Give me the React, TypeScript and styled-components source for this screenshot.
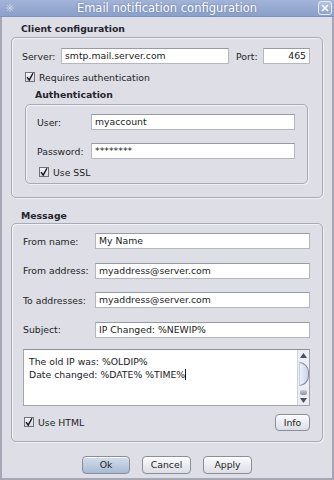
import React from "react";
import styled, { createGlobalStyle } from "styled-components";

const Global = createGlobalStyle`
  html, body { margin: 0; padding: 0; background: #dddee6; }
  body { font-family: "DejaVu Sans", "Liberation Sans", sans-serif; font-size: 9.3px; color: #1e1e22; }
  * { box-sizing: border-box; }
`;

const Window = styled.div`
  width: 334px;
  height: 480px;
  display: flex;
  flex-direction: column;
  background: #dddee6;
  border-left: 2px solid #a5a8b4;
  border-right: 2px solid #a5a8b4;
  border-bottom: 2px solid #a5a8b4;
`;

const TitleBar = styled.div`
  height: 17px;
  margin: 0 -2px;
  display: flex;
  align-items: center;
  padding: 0 2px 0 4px;
  background: linear-gradient(#a2b4d8, #8aa0ca);
  border-bottom: 1px solid #7d92bb;
`;

const TitleIcon = styled.div`
  width: 12px;
  height: 12px;
  opacity: 0.45;
  display: flex;
  align-items: center;
  justify-content: center;
`;

const TitleText = styled.div`
  flex: 1;
  text-align: center;
  color: #ffffff;
  font-size: 11.5px;
  line-height: 17px;
  text-shadow: 0 0 2px #5b6f98;
`;

const CloseBtn = styled.div`
  width: 14px;
  height: 14px;
  border: 1px solid #e6ecf7;
  border-radius: 3px;
  background: linear-gradient(#b3c3e2, #8ea4cd);
  display: flex;
  align-items: center;
  justify-content: center;
`;

const Content = styled.div`
  flex: 1;
  display: flex;
  flex-direction: column;
  padding: 0 9px;
`;

const GroupTitle = styled.div<{ $top: number; $weight?: string; $indent?: number }>`
  margin-top: ${(p) => p.$top}px;
  margin-bottom: ${(p) => (p.$top < 8 ? 1 : 0)}px;
  padding-left: ${(p) => p.$indent ?? 10}px;
  height: 14px;
  line-height: 14px;
  font-weight: ${(p) => p.$weight ?? "bold"};
  color: #26262c;
`;

const Group = styled.div<{ $pad: string }>`
  display: flex;
  flex-direction: column;
  border: 1px solid #a8aab6;
  border-radius: 5px;
  box-shadow: inset 1px 1px 0 #f1f2f6, 1px 1px 0 #eef0f4;
  padding: ${(p) => p.$pad};
`;

const Row = styled.div<{ $top?: number; $indent?: number; $h?: number }>`
  display: flex;
  align-items: center;
  height: ${(p) => p.$h ?? 16}px;
  margin-top: ${(p) => p.$top ?? 0}px;
  padding-left: ${(p) => p.$indent ?? 0}px;
`;

const Label = styled.div<{ $w?: number; $ml?: number }>`
  width: ${(p) => (p.$w ? `${p.$w}px` : "auto")};
  margin-left: ${(p) => p.$ml ?? 0}px;
  flex-shrink: 0;
  white-space: nowrap;
`;

const Field = styled.div<{ $w?: number; $right?: boolean }>`
  ${(p) => (p.$w ? `width: ${p.$w}px; flex-shrink: 0;` : "flex: 1;")}
  height: 16px;
  background: #ffffff;
  border: 1px solid #b4b6c0;
  border-top-color: #989aa5;
  padding: 0 3px;
  line-height: 14px;
  text-align: ${(p) => (p.$right ? "right" : "left")};
  white-space: nowrap;
  overflow: hidden;
  color: #1a1a1e;
`;

const Box = styled.div`
  width: 10px;
  height: 10px;
  border: 1px solid #6f727e;
  background: linear-gradient(#f4f4f7, #d6d8e0);
  display: flex;
  align-items: center;
  justify-content: center;
  margin-right: 4px;
`;

const Inner = styled(Group)`
  margin: 1px 2px 0 3px;
`;

const TextArea = styled.div`
  margin-top: 11px;
  height: 57px;
  display: flex;
  background: #ffffff;
  border: 1px solid #a2a4ae;
  border-top-color: #8d8f99;
`;

const TextBody = styled.div`
  flex: 1;
  padding: 5px 5px;
  line-height: 13px;
  color: #1a1a1e;
`;

const Caret = styled.span`
  display: inline-block;
  width: 1px;
  height: 11px;
  background: #111;
  vertical-align: -2px;
`;

const Scroll = styled.div`
  width: 12px;
  display: flex;
  flex-direction: column;
  align-items: center;
  background: #eceef3;
  border-left: 1px solid #d2d4dc;
  padding: 3px 0 2px;
`;

const Track = styled.div`
  flex: 1;
  width: 100%;
  display: flex;
  flex-direction: column;
  padding: 4px 0 2px;
`;

const Thumb = styled.div`
  height: 24px;
  margin-left: 1px;
  border: 1px solid #7f8aa4;
  border-left-color: #c6cede;
  border-radius: 0 12px 12px 0;
  background: linear-gradient(90deg, #eef1f8, #c9d3e6);
`;

const Grip = styled.div`
  height: 5px;
  margin: 4px 2px 0;
  border-radius: 2px;
  background: linear-gradient(#c7cbd6, #8e93a2);
`;

const BottomRow = styled.div`
  display: flex;
  align-items: center;
  margin-top: 8px;
  height: 17px;
`;

const Check = styled.div`
  display: flex;
  align-items: center;
  flex: 1;
  padding-left: 1px;
`;

const Button = styled.div<{ $w: number; $h: number; $def?: boolean }>`
  width: ${(p) => p.$w}px;
  height: ${(p) => p.$h}px;
  border: 1px solid #8a8d9a;
  border-radius: 4px;
  background: ${(p) =>
    p.$def ? "linear-gradient(#d3deec, #a9bad2)" : "linear-gradient(#fbfbfd, #dcdee6)"};
  box-shadow: inset 0 1px 0 #ffffff;
  display: flex;
  align-items: center;
  justify-content: center;
  color: #1e1e22;
`;

const Footer = styled.div`
  flex: 1;
  display: flex;
  justify-content: center;
  gap: 12px;
  padding-top: 14px;
`;

const CheckMark = () => (
  <svg width="9" height="10" viewBox="0 0 9 10">
    <path d="M1.2 5.2 L3.6 8.6 L7.8 0.8" fill="none" stroke="#15151a" strokeWidth="1.6" />
  </svg>
);

const CheckBox = ({ label }: { label: string }) => (
  <>
    <Box>
      <CheckMark />
    </Box>
    <span>{label}</span>
  </>
);

export default function App() {
  return (
    <>
      <Global />
      <Window>
        <TitleBar>
          <TitleIcon>
            <svg width="10" height="10" viewBox="0 0 10 10">
              <path d="M1 5h8M5 1v8M2 2l6 6M8 2l-6 6" stroke="#ffffff" strokeWidth="1" />
            </svg>
          </TitleIcon>
          <TitleText>Email notification configuration</TitleText>
          <CloseBtn>
            <svg width="10" height="10" viewBox="0 0 10 10">
              <path d="M2 2 L8 8 M8 2 L2 8" stroke="#ffffff" strokeWidth="1.6" />
            </svg>
          </CloseBtn>
        </TitleBar>
        <Content>
          <GroupTitle $top={5}>Client configuration</GroupTitle>
          <Group $pad="10px 12px 13px 10px">
            <Row>
              <Label $w={39}>Server:</Label>
              <Field>smtp.mail.server.com</Field>
              <Label $w={27} $ml={7}>Port:</Label>
              <Field $w={47} $right>465</Field>
            </Row>
            <Row $top={6} $h={14} $indent={3}>
              <CheckBox label="Requires authentication" />
            </Row>
            <GroupTitle $top={4} $indent={13}>
              Authentication
            </GroupTitle>
            <Inner $pad="9px 12px 4px 11px">
              <Row>
                <Label $w={54}>User:</Label>
                <Field>myaccount</Field>
              </Row>
              <Row $top={13}>
                <Label $w={54}>Password:</Label>
                <Field>********</Field>
              </Row>
              <Row $top={6} $h={14} $indent={2}>
                <CheckBox label="Use SSL" />
              </Row>
            </Inner>
          </Group>
          <GroupTitle $top={11}>Message</GroupTitle>
          <Group $pad="9px 12px 10px 11px">
            <Row>
              <Label $w={72}>From name:</Label>
              <Field>My Name</Field>
            </Row>
            <Row $top={13.5}>
              <Label $w={72}>From address:</Label>
              <Field>myaddress@server.com</Field>
            </Row>
            <Row $top={13.5}>
              <Label $w={72}>To addresses:</Label>
              <Field>myaddress@server.com</Field>
            </Row>
            <Row $top={13.5}>
              <Label $w={72}>Subject:</Label>
              <Field>IP Changed: %NEWIP%</Field>
            </Row>
            <TextArea>
              <TextBody>
                The old IP was: %OLDIP%
                <br />
                Date changed: %DATE% %TIME%
                <Caret />
              </TextBody>
              <Scroll>
                <svg width="7" height="5" viewBox="0 0 7 5">
                  <path d="M3.5 0 L7 5 L0 5 Z" fill="#4c5060" />
                </svg>
                <Track>
                  <Thumb />
                  <Grip />
                </Track>
                <svg width="7" height="5" viewBox="0 0 7 5">
                  <path d="M0 0 L7 0 L3.5 5 Z" fill="#4c5060" />
                </svg>
              </Scroll>
            </TextArea>
            <BottomRow>
              <Check>
                <CheckBox label="Use HTML" />
              </Check>
              <Button $w={35} $h={17}>Info</Button>
            </BottomRow>
          </Group>
          <Footer>
            <Button $w={48} $h={18} $def>Ok</Button>
            <Button $w={49} $h={18}>Cancel</Button>
            <Button $w={49} $h={18}>Apply</Button>
          </Footer>
        </Content>
      </Window>
    </>
  );
}
